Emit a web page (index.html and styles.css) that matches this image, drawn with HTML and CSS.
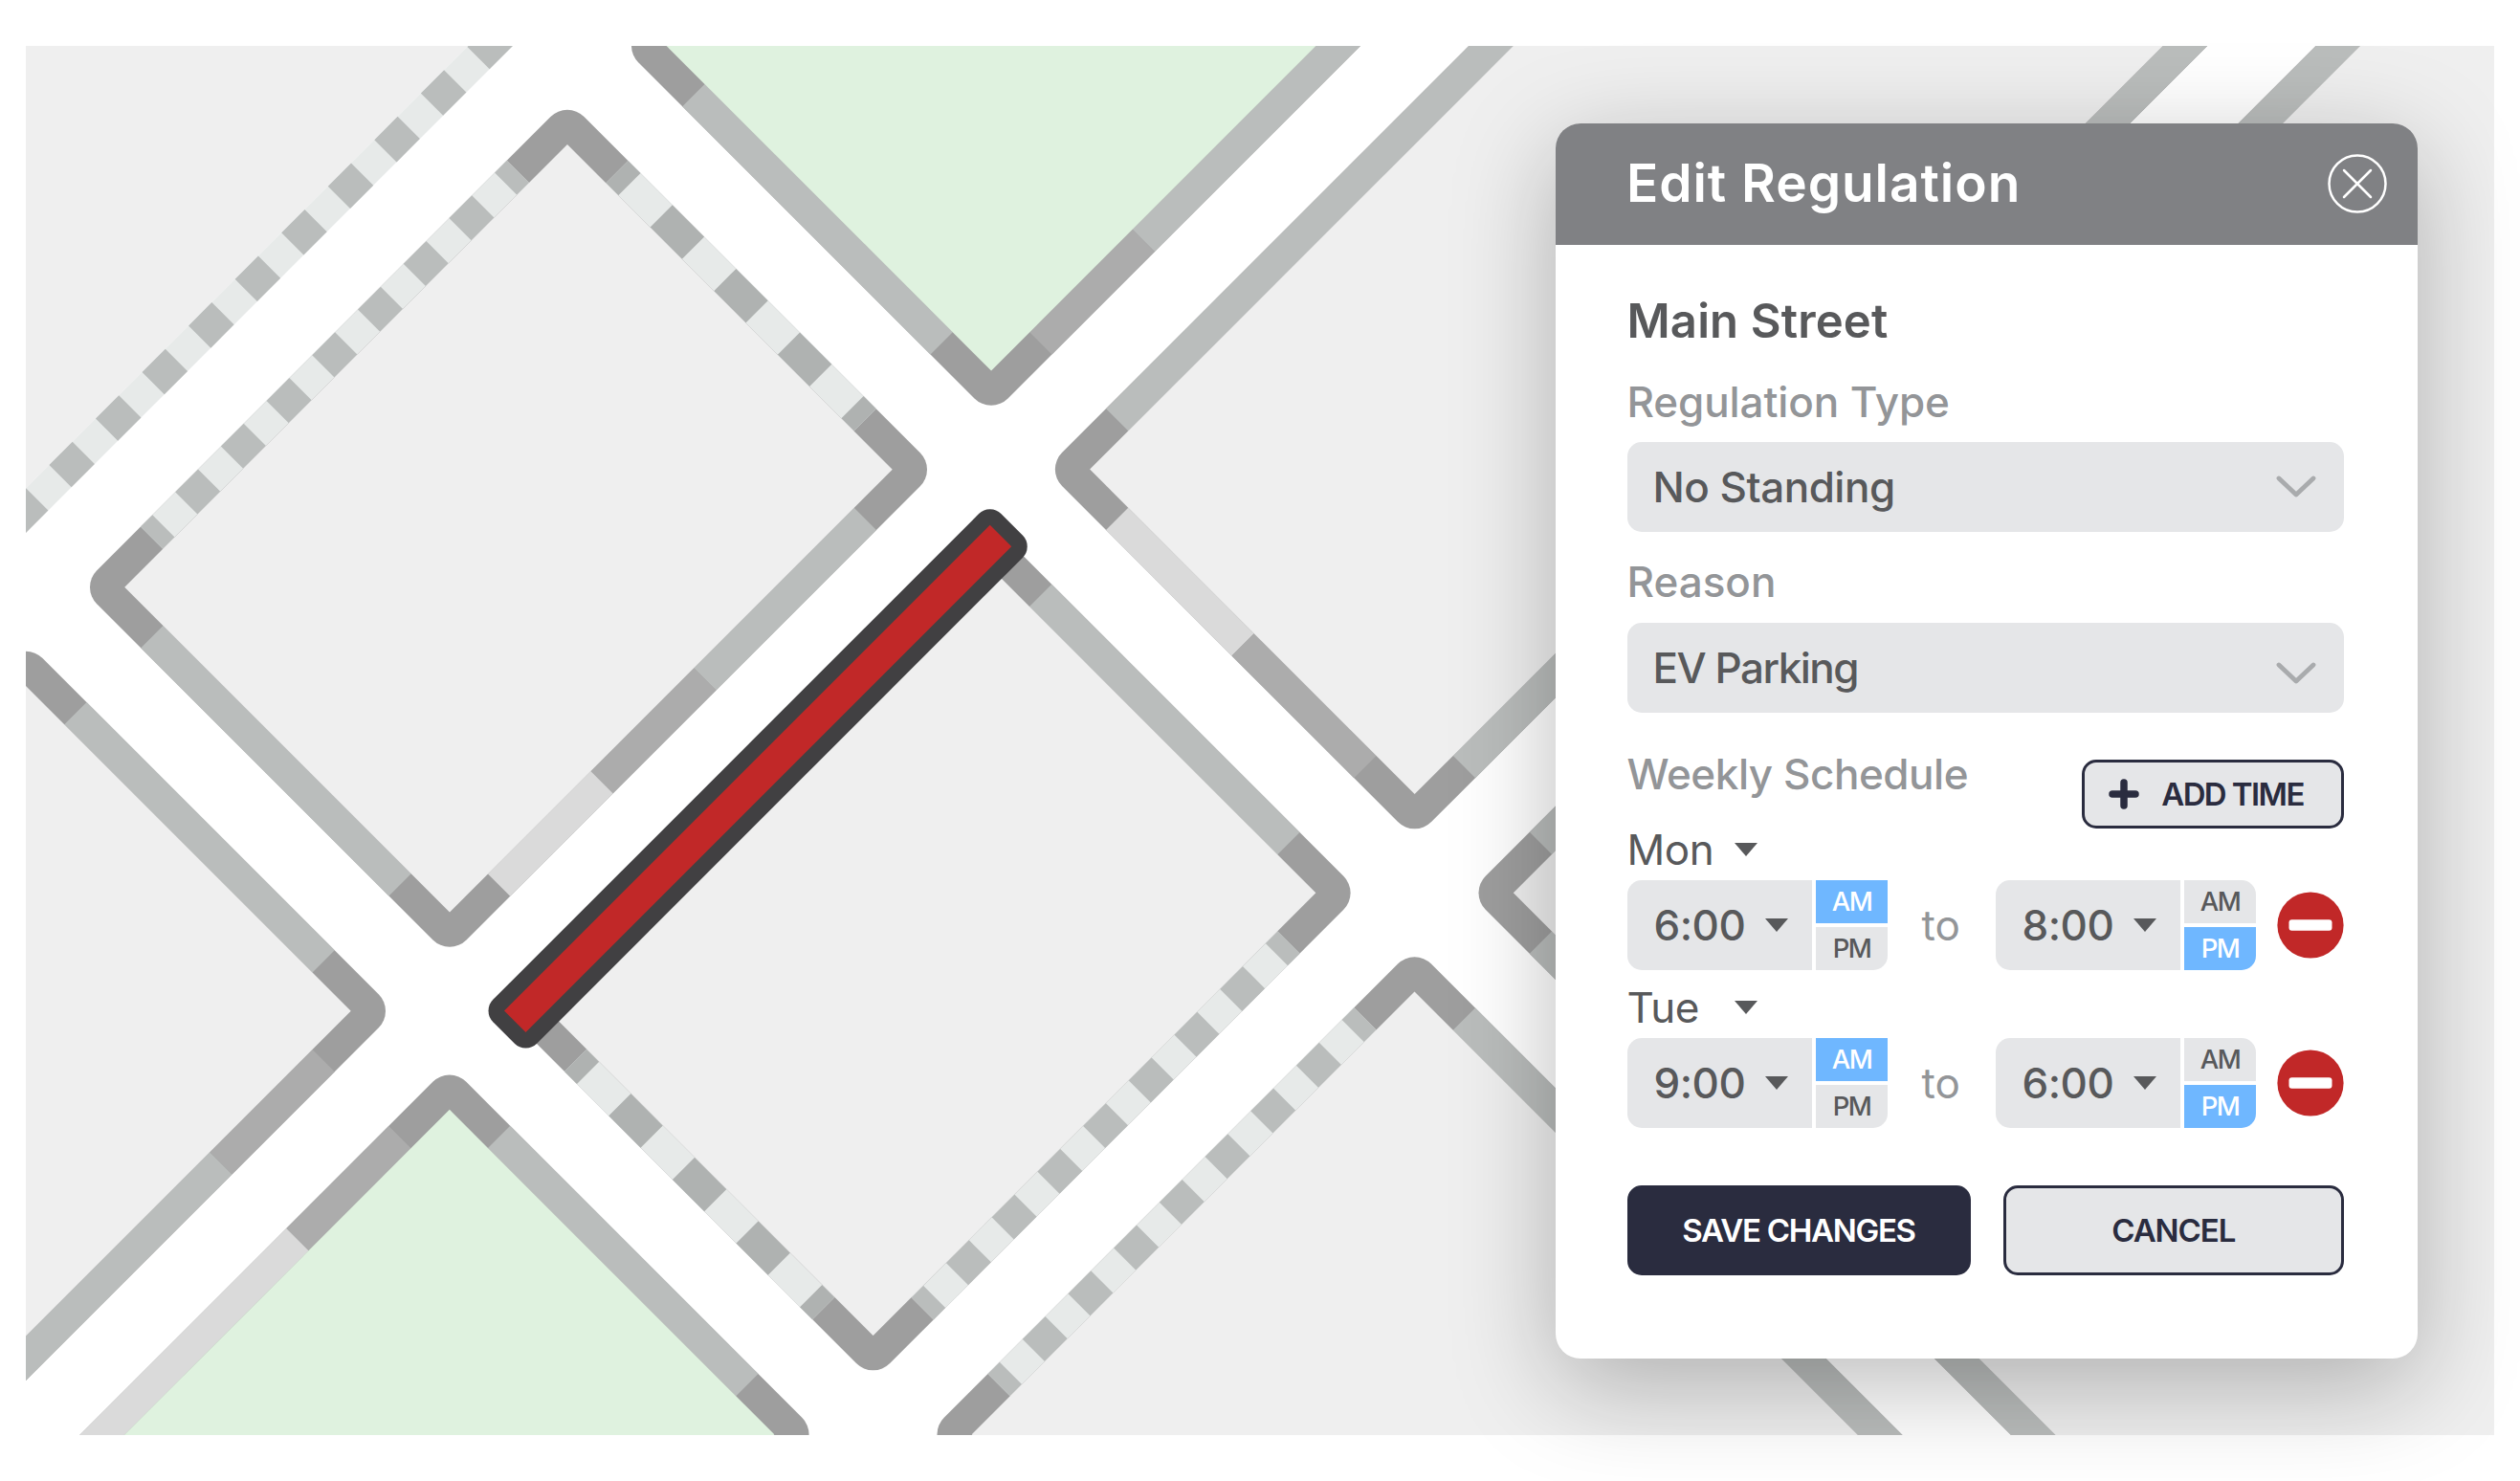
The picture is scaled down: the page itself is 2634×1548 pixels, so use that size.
FILE: index.html
```html
<!DOCTYPE html>
<html lang="en">
<head>
<meta charset="utf-8">
<title>Edit Regulation</title>
<link rel="stylesheet" href="styles.css">
</head>
<body>
<main class="stage">
  <!-- Street map: local axes are s = x + y and t = y - x, so every block is an upright rectangle -->
  <svg class="map" viewBox="27 48 2580 1451.5" aria-label="Street map">
    <rect class="street" x="27" y="48" width="2580" height="1451.5"/>
    <g transform="matrix(.5 .5 -.5 .5 0 0)">
      <!-- north-west block -->
      <rect class="block" x="-800" y="-1400" width="1337.5" height="3000"/>
      <path class="gap" d="M560.7-600V700"/>
      <path class="dash-nw" d="M560.7-585.1V700"/>

      <!-- north park -->
      <rect class="corner" x="697.5" y="-2600" width="772.5" height="1998" rx="35"/>
      <path class="curb plain" d="M824.5-625.3H1343M1446.7-943.8V-2600"/>
      <path class="curb mid" d="M1446.7-729V-943.8"/>
      <rect class="park" x="744" y="-2600" width="679.5" height="1951.4"/>

      <!-- north-east block -->
      <rect class="corner" x="1583.2" y="-2600" width="772" height="1998" rx="35"/>
      <path class="curb plain" d="M1606.5-729V-2600M2332-729V-2600"/>
      <path class="curb light" d="M1710-625.3H1972.8"/>
      <path class="curb mid" d="M1972.8-625.3H2228.5"/>
      <rect class="block" x="1629.7" y="-2600" width="679" height="1951.4"/>

      <!-- east block -->
      <rect class="corner" x="2468.5" y="-2600" width="2600" height="1998" rx="35"/>
      <path class="curb plain" d="M2491.8-729V-2600M2595.5-625.3H5000"/>
      <rect class="block" x="2515" y="-2600" width="2600" height="1951.4"/>

      <!-- west block -->
      <rect class="corner" x="697.5" y="-488.5" width="772.5" height="1018.5" rx="35"/>
      <path class="curb plain" d="M824.5 506.8H1343M1446.7-362V-27"/>
      <path class="curb mid" d="M1446.7-27V188.6"/>
      <path class="curb light" d="M1446.7 188.6V403.5"/>
      <path class="gap" d="M720.7-362V403.5M824.5-465.3H1343"/>
      <path class="dash-short" d="M720.7-362V403.5"/>
      <path class="dash-long" d="M824.5-465.3H1343"/>
      <rect class="block" x="744" y="-442" width="679.5" height="925.5"/>

      <!-- centre block -->
      <rect class="corner" x="1583.2" y="-488.5" width="772" height="1018.5" rx="35"/>
      <path class="curb plain" d="M1710-465.3H2228.5"/>
      <path class="gap" d="M2332-362V403.5M1710 506.8H2228.5"/>
      <path class="dash-short" d="M2332-362V403.5"/>
      <path class="dash-long" d="M1710 506.8H2228.5"/>
      <rect class="block" x="1629.7" y="-442" width="679" height="925.5"/>

      <!-- south-east block -->
      <rect class="corner" x="2468.5" y="-488.5" width="2600" height="1018.5" rx="35"/>
      <path class="curb plain" d="M2595.5-465.3H5000"/>
      <path class="gap" d="M2491.8-362V403.5"/>
      <path class="dash-short" d="M2491.8-362V403.5"/>
      <rect class="block" x="2515" y="-442" width="2600" height="925.5"/>

      <!-- south-west block -->
      <rect class="corner" x="697.5" y="643.5" width="772.5" height="1500" rx="35"/>
      <path class="curb plain" d="M824.5 666.7H1343M1446.7 984.8V2000"/>
      <path class="curb mid" d="M1446.7 770.5V984.8"/>
      <rect class="block" x="744" y="690" width="679.5" height="1400"/>

      <!-- south park -->
      <rect class="corner" x="1583.2" y="643.5" width="772" height="1500" rx="35"/>
      <path class="curb plain" d="M1710 666.7H2228.5"/>
      <path class="curb mid" d="M1606.5 770.5V984.6"/>
      <path class="curb light" d="M1606.5 984.6V2000"/>
      <rect class="park" x="1629.7" y="690" width="679" height="1400"/>

      <!-- selected curb -->
      <rect class="selected" x="1583.5" y="-486" width="45" height="1015.5"/>
    </g>
  </svg>

  <section class="panel">
    <header class="panel-head">
      <h1 class="title">Edit Regulation</h1>
      <svg class="close" viewBox="0 0 62 62"><circle cx="31" cy="31" r="29.5"/><path d="M17 17 45 45M45 17 17 45"/></svg>
    </header>
    <div class="panel-body">
      <h2 class="street-name">Main Street</h2>

      <div class="label label-type">Regulation Type</div>
      <div class="select select-type">
        <span class="fit-standing">No Standing</span>
        <svg class="chevron" viewBox="0 0 42 24"><path d="M3 3 21 20 39 3"/></svg>
      </div>

      <div class="label label-reason">Reason</div>
      <div class="select select-reason">
        <span class="fit-ev">EV Parking</span>
        <svg class="chevron chevron-low" viewBox="0 0 42 24"><path d="M3 3 21 20 39 3"/></svg>
      </div>

      <div class="schedule-head">
        <div class="label label-week">Weekly Schedule</div>
        <div class="btn btn-add">
          <svg class="plus" viewBox="0 0 32 32"><path d="M16 4V28M4 16H28"/></svg>
          <span class="fit-add">ADD TIME</span>
        </div>
      </div>

      <div class="day"><span class="day-name">Mon</span><i class="caret"></i></div>
      <div class="slot">
        <div class="time"><span class="hour">6:00</span><i class="caret"></i></div>
        <div class="ampm"><span class="half on square">AM</span><span class="half">PM</span></div>
        <span class="to">to</span>
        <div class="time"><span class="hour">8:00</span><i class="caret"></i></div>
        <div class="ampm"><span class="half">AM</span><span class="half on">PM</span></div>
        <svg class="remove" viewBox="0 0 70 70"><circle cx="35" cy="35" r="34.6"/><rect x="12.5" y="29.2" width="45" height="11.5" rx="3"/></svg>
      </div>

      <div class="day day-next"><span class="day-name">Tue</span><i class="caret"></i></div>
      <div class="slot">
        <div class="time"><span class="hour">9:00</span><i class="caret"></i></div>
        <div class="ampm"><span class="half on square">AM</span><span class="half">PM</span></div>
        <span class="to">to</span>
        <div class="time"><span class="hour">6:00</span><i class="caret"></i></div>
        <div class="ampm"><span class="half">AM</span><span class="half on">PM</span></div>
        <svg class="remove" viewBox="0 0 70 70"><circle cx="35" cy="35" r="34.6"/><rect x="12.5" y="29.2" width="45" height="11.5" rx="3"/></svg>
      </div>

      <div class="actions">
        <div class="btn btn-save"><span class="fit-save">SAVE CHANGES</span></div>
        <div class="btn btn-cancel"><span class="fit-cancel">CANCEL</span></div>
      </div>
    </div>
  </section>
</main>
</body>
</html>
```
FILE: styles.css
```css
* { box-sizing: border-box; }
body { margin: 0; background: #fff; font-family: Inter, "Liberation Sans", sans-serif; color: #58595b; }
.stage { position: relative; width: 2634px; height: 1548px; padding: 48px 27px; overflow: hidden; }

.map { display: block; width: 2580px; height: 1451.5px; }
.street { fill: #fff; }
.block { fill: #efefef; }
.park { fill: #dff2df; }
.corner { fill: #9e9e9e; }
.curb, .gap, .dash-nw, .dash-short, .dash-long { fill: none; stroke-width: 46.5; }
.plain { stroke: #babdbc; }
.mid { stroke: #acacac; }
.light { stroke: #dadada; }
.gap { stroke: #e7eae9; }
.dash-nw { stroke: #babdbc; stroke-dasharray: 48.56; }
.dash-short { stroke: #babdbc; stroke-dasharray: 47.7; stroke-dashoffset: 22.4; }
.dash-long { stroke: #afb2b1; stroke-dasharray: 66.6; stroke-dashoffset: 40.6; }
.selected { fill: #c12828; stroke: #414042; stroke-width: 46.6; stroke-linejoin: round; paint-order: stroke; }

.panel { position: absolute; left: 1626px; top: 129px; width: 900.5px; height: 1290.5px; border-radius: 26px; background: #fff; box-shadow: 0 28px 107px rgba(0, 0, 0, .27); }
.panel-head { display: flex; align-items: center; justify-content: space-between; height: 126.5px; padding: 0 32px 0 74px; border-radius: 26px 26px 0 0; background: #808184; }
.title { margin: 0; font-size: 55px; font-weight: 600; line-height: 66px; letter-spacing: .95px; color: #fff; transform: translateY(-1.5px); white-space: nowrap; }
.close { width: 62px; height: 62px; fill: none; stroke: #fff; stroke-width: 2.5; stroke-linecap: round; }

.panel-body { display: flex; flex-direction: column; padding: 52px 76.5px 0 74.5px; white-space: nowrap; }
.street-name { margin: 0 0 30px; font-size: 49px; font-weight: 600; line-height: 56px; letter-spacing: .15px; }
.label { font-size: 44px; font-weight: 500; line-height: 52px; color: #939598; }
.label-type { letter-spacing: -.1px; }
.label-week { letter-spacing: -.45px; }
.select { display: flex; align-items: center; justify-content: space-between; height: 94px; padding: 0 29px 0 27px; border-radius: 15px; background: #e5e6e8; font-size: 44px; font-weight: 500; }
.select-type { margin: 16px 0 26px; }
.select-reason { margin: 17px 0 38px; }
.fit-standing { letter-spacing: -.5px; }
.fit-ev { letter-spacing: -1.5px; }
.chevron { width: 42px; height: 24px; fill: none; stroke: #a9abad; stroke-width: 4.8; stroke-linecap: round; stroke-linejoin: round; }
.chevron-low { margin-top: 12px; }

.schedule-head { display: flex; justify-content: space-between; height: 83px; }
.btn { display: flex; align-items: center; justify-content: center; border: 3px solid #2a2c3f; border-radius: 15px; background: #e5e6e8; color: #2a2c3f; font-size: 33px; font-weight: 600; }
.btn-add { align-self: flex-end; width: 274px; height: 72px; padding-right: 14px; gap: 23px; }
.fit-add { letter-spacing: -1.6px; }
.plus { width: 32px; height: 32px; fill: none; stroke: #2a2c3f; stroke-width: 7.5; stroke-linecap: round; }

.day { display: flex; align-items: center; height: 44px; margin-bottom: 10px; font-size: 44px; line-height: 44px; letter-spacing: -.5px; }
.day-next { margin-top: 17px; }
.day-name { width: 112px; }
.caret { border: 12px solid transparent; border-top: 14px solid #58595b; border-bottom: 0; }
.slot { display: flex; align-items: center; height: 94px; }
.time { display: flex; align-items: center; justify-content: space-between; width: 193.5px; height: 94px; padding: 0 25.5px 0 28px; border-radius: 15px 0 0 15px; background: #e5e6e8; font-size: 44px; font-weight: 500; letter-spacing: -.5px; }
.ampm { display: flex; flex-direction: column; gap: 4px; width: 75px; height: 94px; margin-left: 4px; }
.half { display: flex; align-items: center; justify-content: center; flex: 1; background: #e5e6e8; font-size: 27.5px; font-weight: 500; letter-spacing: -1.5px; }
.half:first-child { border-top-right-radius: 15px; }
.half:last-child { border-bottom-right-radius: 15px; }
.half.square { border-radius: 0; }
.half.on { background: #6fb7ff; color: #fff; }
.to { width: 112.5px; padding-right: 1px; text-align: center; font-size: 44px; color: #939598; }
.remove { width: 70px; height: 70px; margin-left: auto; fill: #c12828; }
.remove rect { fill: #fff; }

.actions { display: flex; justify-content: space-between; margin-top: 60px; }
.btn-save { width: 359px; height: 94px; background: #2a2c3f; color: #fff; }
.btn-cancel { width: 356.5px; height: 94px; }
.fit-save { letter-spacing: -1.3px; }
.fit-cancel { letter-spacing: -1.1px; }
```
